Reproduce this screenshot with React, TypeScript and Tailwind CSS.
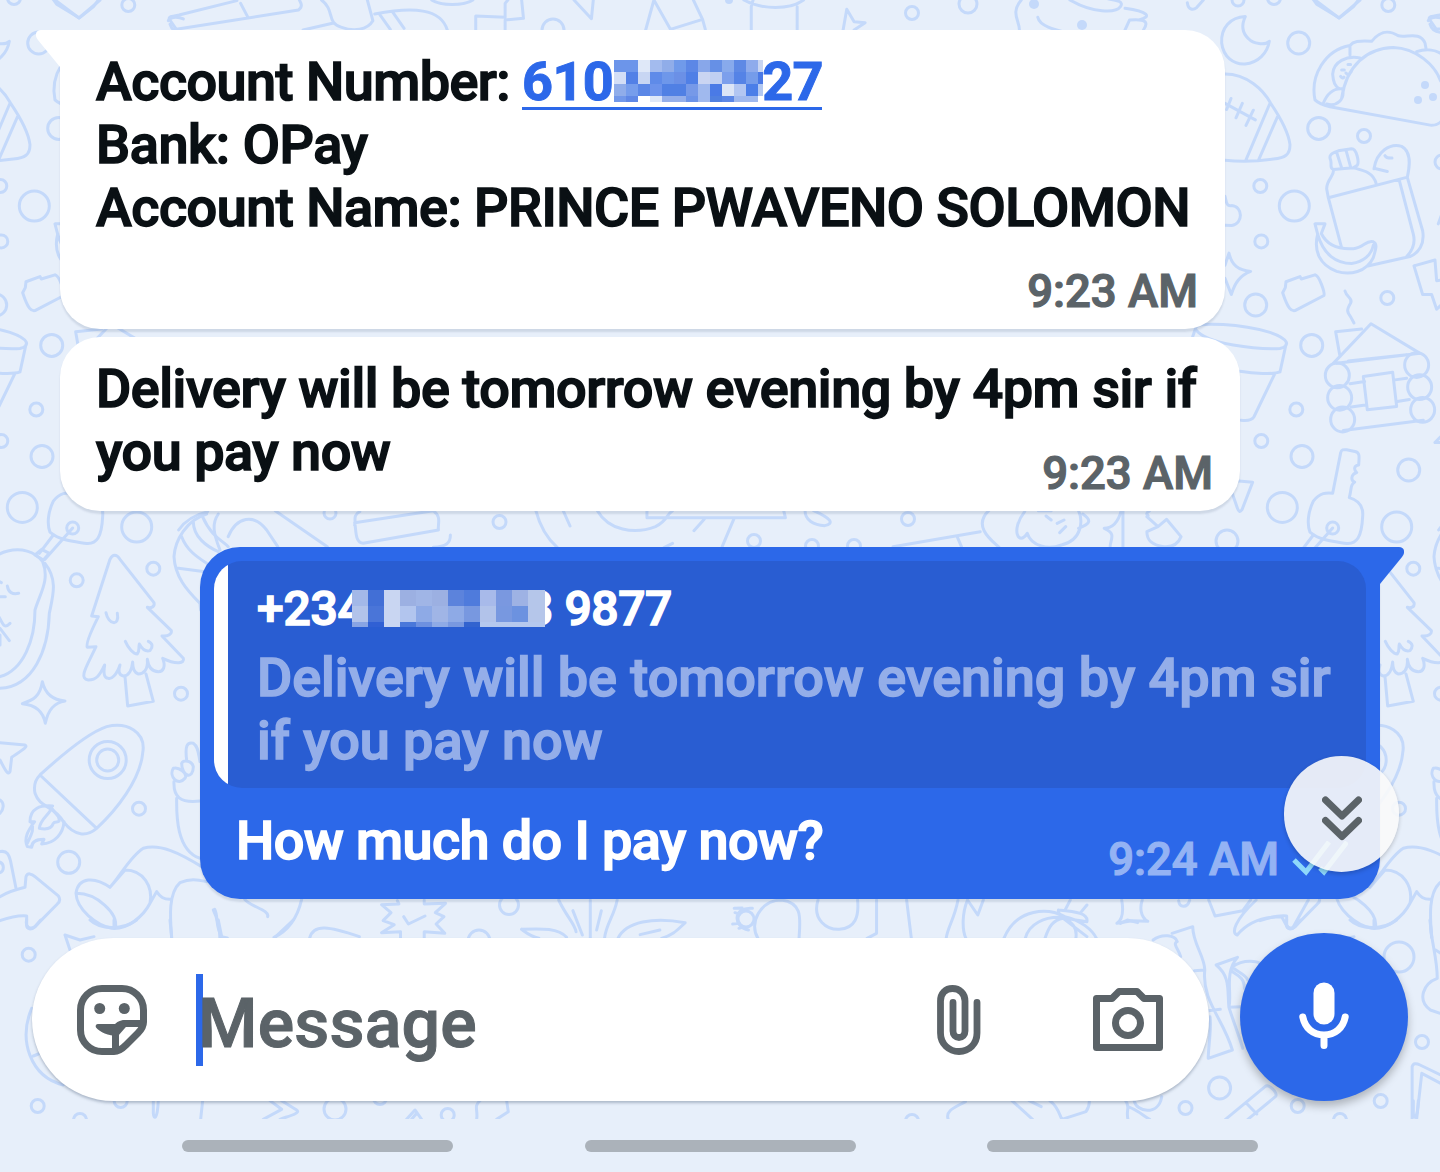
import type { ReactNode } from 'react'

// Colours of the censored blocks, one array per row
const accountPixels = [
  ['#6c95ea', '#6c95ea', '#dfe8f8', '#a3bbee', '#90ade9', '#709aea', '#5c87e6', '#88a7ea', '#6690e6', '#88aaec', '#5e89e5', '#8eabec', '#c8d5f2'],
  ['#d3def6', '#5280e6', '#c8d6f3', '#5f8be9', '#6e97ea', '#6b90e6', '#4f7fe6', '#cad5f2', '#c0cff2', '#7c9fec', '#5583e6', '#759cea', '#4b7ae6'],
  ['#90adea', '#769dec', '#5b87e6', '#6c93ec', '#5080e4', '#5080e4', '#7699e8', '#a0b9ee', '#4a7ae6', '#dce5f6', '#b2c6f2', '#4b7ee8', '#b2c8f2'],
  ['#7298ea', '#6088e6', '#ffffff', '#dfe8f8', '#95afea', '#95afea', '#6c93e8', '#a0b9ee', '#5080e0', '#5c87e6', '#a0b9ee', '#a0b9ee', '#ffffff'],
]

const phonePixels = [
  ['#a3b8e8', '#426fd6', '#c9d6f2', '#9cb0e2', '#a0b5e6', '#9cb0e2', '#5c83dc', '#4f7bdc', '#a8baea', '#7a98e0', '#9eb2e4', '#b5c6ea', '#b5c6ea'],
  ['#b2c3ea', '#4a75d8', '#c9d6f2', '#b2c5ee', '#8eaae6', '#a0b5e6', '#8eaae6', '#7898e0', '#b2c3ea', '#7898e0', '#6c92e0', '#b5c6ea', '#b5c6ea'],
  ['#88a4e4', '#3060d4', '#c9d6f2', '#4a78da', '#6d90e0', '#8eaae6', '#7898e0', '#3263cf', '#b5c8ee', '#b5c8ee', '#b5c8ee', '#b5c8ee', '#b5c8ee'],
]

// x, y, radius of the bubbles scattered over the wallpaper
const rings = [
  [38.7, 43, 11], [128.3, 5, 6.5], [58.7, 128.4, 11], [104, 136, 6.5], [0.3, 186, 6.5], [34.3, 206, 15],
  [1.3, 241.4, 6.5], [-4.3, 305, 11], [127.3, 298, 6.5], [51.7, 345.4, 11], [36.3, 409.5, 6.5], [1.3, 441, 6.5],
  [42, 456.5, 11], [148.7, 470, 11], [22.3, 507.4, 15], [136.7, 527, 15], [182, 162, 7], [-22, 0, 6],
  [14, -2, 6.5], [76.7, 580.3, 6.5], [153.3, 568.7, 6.5], [181, 693.7, 6.5], [139, 808.7, 6.5], [68.7, 862.3, 11],
  [107.7, 760, 18.5], [107.7, 760, 11], [28.7, 954.7, 6.5], [37.7, 1106, 6.5], [80, 1120, 6.5], [120.7, 1101, 6.5],
  [335, 1109, 11], [447.7, 1115, 6.5], [380, 1098, 6.5], [1219.6, 1088, 11], [1185.5, 1108, 6.5], [139, 957, 15],
  [162, 1042, 6.5], [912, 1121, 6.5], [499.5, 522, 6.5], [908, 519, 6.5], [754, 541, 6.5], [812, 546, 6.5],
  [854, 546, 6.5], [553, 30, 11], [912, 13, 6.5], [968, 4, 9], [509, 905, 9.5], [479, 941, 11], [1227, 541, 11],
  [746, 919, 8], [330, 513, 6], [72.7, 528, 6],
]

function Strokes({ at, paths }: { at: string; paths: string[] }) {
  return (
    <g transform={at}>
      {paths.map((d) => (
        <path key={d} d={d} vectorEffect="non-scaling-stroke" />
      ))}
    </g>
  )
}

function WallpaperTile() {
  return (
    <>
      {rings.map(([x, y, r]) => (
        <circle key={`${x}-${y}-${r}`} cx={x} cy={y} r={r} />
      ))}
      {/* moon, taco, football, picnic bag, cabin, key */}
      <Strokes
        at="translate(-80 0) scale(.3333 .3444)"
        paths={[
          'M196 48C150 50 122 82 125 125C130 165 160 188 195 186C235 182 262 155 268 120C255 132 220 128 205 112C184 92 186 68 196 48Z',
          'M22 8C25 30 40 30 50 22L70 0M398 -4L410 12L478 52L520 20L538 -4',
          'M745 60C755 45 780 50 790 55M750 70C755 88 770 94 790 94',
          'M135 215C200 215 250 260 272 300C300 340 325 380 330 420C330 450 315 458 280 462C220 470 180 470 135 465M269 302L198 464M292 340L236 464M135 300L226 348M153 286L140 318M187 300L168 342M220 320L198 364',
          'M405 290C390 220 435 145 510 132C520 120 535 118 575 120C600 90 625 86 655 104C680 110 720 90 735 125L738 140M510 132L510 160M710 150C740 140 770 145 790 160M405 290C415 300 430 305 450 310L755 364C775 364 790 350 795 330M485 285C500 190 560 140 640 138C710 140 765 190 782 235M540 168C500 160 460 180 458 215C460 240 465 250 478 258M430 300C440 275 460 255 488 258C495 290 470 310 440 302M485 203h8M504 187h8M482 222q6 8 10 2M498 212q8 10 16 -4',
          'M452 465C445 450 455 445 475 438L515 432C530 432 538 470 532 480L520 487L460 492C448 488 456 480 452 465ZM470 442L485 488M498 436L512 485M460 492C465 510 440 520 440 548L445 574L680 515M520 487C550 495 580 500 588 532M582 490C590 440 630 415 665 425C695 440 690 480 682 515M615 452Q620 460 636 459M588 490L622 498M445 574L485 720M658 524L700 680C708 710 695 730 680 745M682 515L728 670C735 710 715 735 690 745L560 773M405 650h30L424 678C440 710 470 725 520 722C550 720 560 695 580 702C595 708 585 730 580 748C560 790 510 800 470 788C420 770 400 730 413 680ZM413 680C430 740 470 765 515 765C550 760 575 740 580 712',
          'M135 570C140 590 140 600 155 597C190 600 190 650 155 655L135 654M135 770L147 735C155 770 175 785 212 788C180 800 165 820 154 855L135 808',
          'M318 818L360 803L364 810L405 798C418 800 435 850 432 858L345 902C335 904 325 900 308 850L316 835ZM495 845C500 865 520 865 512 880C500 900 500 905 512 920L522 938',
          'M702 772L765 755L770 815L795 812M702 772L728 855L755 855L770 898L790 880M790 1260L765 1285L790 1285M790 610L775 650',
          'M38 978L48 950C60 935 180 940 270 965C330 985 330 1005 300 1012C230 1015 80 1000 48 958M318 1000L300 1080C280 1088 220 1084 180 1078M284 1086L222 1210C215 1222 200 1222 183 1220M160 1395L218 1400L186 1480C180 1488 176 1486 172 1475L156 1430',
          'M460 1055L573 940L720 1026L470 1055M480 1035L467 963L545 955M505 1048L680 1030M510 1114L554 1108M645 1103L680 1098M514 1182L556 1176M652 1166L688 1160M490 1250L730 1220M550 1093L638 1081L650 1180L562 1190Z',
          'M436 1090a36 36 0 1 0 72 0a36 36 0 1 0 -72 0M443 1155a36 36 0 1 0 72 0a36 36 0 1 0 -72 0M452 1218a36 36 0 1 0 72 0a36 36 0 1 0 -72 0M674 1060a36 36 0 1 0 72 0a36 36 0 1 0 -72 0M683 1124a36 36 0 1 0 72 0a36 36 0 1 0 -72 0M692 1190a36 36 0 1 0 72 0a36 36 0 1 0 -72 0',
          'M458 1432L482 1315C484 1305 490 1305 500 1306L525 1311C540 1314 538 1325 536 1350C520 1352 522 1365 530 1372C512 1378 512 1395 524 1400C510 1410 516 1415 508 1445C545 1455 550 1480 548 1500C545 1560 530 1580 500 1578C460 1572 420 1570 390 1545C380 1520 385 1485 400 1455C420 1430 440 1430 458 1432Z',
        ]}
      />
      {/* taco spots */}
      <g fill="#c4d9fa" stroke="none">
        <circle cx="165" cy="85" r="4" />
        <circle cx="158" cy="100" r="4" />
        <circle cx="173" cy="97" r="4" />
        <circle cx="1082" cy="25" r="5" />
        <circle cx="1034" cy="4" r="5" />
        <circle cx="729" cy="0" r="4" />
      </g>
      {/* avocado, tree, rocket, stocking */}
      <Strokes
        at="translate(0 500) scale(.3333)"
        paths={[
          'M218 84L135 178M160 105L118 160M105 165L125 148L148 160L130 180Z',
          'M-60 230C-40 150 80 120 128 185C150 240 120 280 105 330C105 420 70 510 0 530M135 190C175 240 158 290 148 340C145 450 100 560 0 565M22 258C25 278 38 284 56 280M0 290H16M-10 240L4 248M-10 340C10 370 10 390 30 370M0 385L28 422M0 405L0 435',
          'M330 178C338 162 350 162 360 178L462 308C465 320 455 325 442 322L514 392C516 402 505 410 486 408L550 475C555 490 530 495 488 475C498 500 490 515 475 515C455 515 445 500 442 478C445 510 430 522 415 522C400 518 398 500 398 486C395 520 380 528 370 528C355 525 355 510 360 495C350 525 335 538 325 535C312 535 310 520 314 495C300 525 290 540 265 540C235 535 260 500 288 440L262 442C255 430 280 380 295 350L275 348ZM375 530L383 618L460 604L438 522M318 338C325 375 360 380 352 340M376 424C385 445 400 462 412 462C420 450 415 445 418 432C428 450 440 455 450 452C460 440 458 430 445 424',
          'M127 545C135 580 155 600 195 603C165 608 145 625 136 670C130 635 110 615 67 611C100 600 120 590 127 545ZM0 728L75 735C85 740 70 748 35 772L30 815C25 825 20 820 0 780M0 900C15 910 10 930 0 940',
          'M120 825C180 770 260 700 320 680C380 665 440 695 428 760C420 840 350 930 290 985C260 1010 225 1010 190 965C160 915 120 925 105 880C100 855 105 840 120 825ZM120 825L290 985',
          'M158 918C120 915 90 925 90 965L104 965C85 990 70 1015 82 1040L95 1042C95 1025 110 1018 132 1018L125 1032C165 1030 190 1000 192 965M155 920C155 940 120 955 118 985C140 990 155 985 160 970C165 960 185 975 175 950L155 925M95 968C105 990 90 1010 82 1030',
          'M530 895C530 930 525 1050 600 1075M600 903C540 910 520 890 522 845M520 805C505 830 535 860 555 835C565 820 535 800 520 805M545 790C545 830 580 840 580 800C575 780 550 780 545 790M560 780C555 740 560 725 580 730C595 740 595 760 600 785',
          'M0 1055C25 1050 28 1070 32 1085L48 1165M-5 1085C15 1090 15 1115 -5 1120M0 1190C25 1175 50 1168 75 1162L78 1130C82 1118 95 1120 105 1130L175 1188C182 1198 180 1205 172 1212L105 1280C95 1290 78 1290 80 1272V1248C50 1245 20 1255 0 1262',
          'M330 1162C360 1130 390 1070 430 1045C480 1030 540 1060 605 1100M375 1110C430 1110 460 1160 450 1210C430 1250 380 1290 335 1285C290 1275 230 1230 228 1180C235 1130 285 1130 330 1162ZM230 1180C290 1180 355 1240 346 1282M450 1210L470 1175C480 1190 490 1200 515 1198M515 1312C510 1250 505 1180 540 1148C570 1135 590 1138 620 1145M640 1230C655 1260 660 1290 660 1320',
          'M522 170C525 120 560 60 620 42M522 170C525 230 560 270 600 310L602 330M580 65C580 110 620 140 655 155M545 110C560 150 590 170 620 190M530 204L615 215M655 42C635 70 640 100 660 150',
        ]}
      />
      <Strokes
        at="translate(100 480) scale(.8546 .3333)"
        paths={[
          'M92 150C100 120 110 105 126 95M120 110C130 170 145 185 150 200M150 170C160 110 180 100 195 150L208 200M205 92L266 200M298 135C300 125 295 105 304 95M298 128L390 92C400 110 395 130 396 150L308 190C298 188 300 150 298 128M410 165C410 190 405 200 390 202M510 92C515 140 525 180 535 202M542 92L550 138M582 92C595 150 625 165 650 140C665 120 662 105 670 92M640 92V113H802L800 92M660 203L670 190M742 115L728 200M695 152L707 118M825 92C825 120 835 135 848 137C860 130 855 115 835 92',
          'M928 200L1030 155M1003 170L1008 200M1040 92C1020 140 1045 185 1052 202M1082 95C1065 150 1075 200 1085 160C1090 200 1110 210 1125 195C1150 180 1150 120 1145 92M1098 92L1113 92M1107 108L1113 120M1128 120L1120 130M1123 158L1130 140M1150 102C1160 120 1160 130 1145 145M1195 92C1190 140 1180 145 1175 145C1190 160 1182 180 1182 200M1197 92V200M1225 110L1238 140L1248 118L1265 170C1262 190 1255 202 1245 200C1230 195 1225 180 1225 155L1238 140M1225 110C1230 105 1220 105 1228 93',
        ]}
      />
      <Strokes
        at="translate(100 880) scale(.7908 .3333)"
        paths={[
          'M145 88C150 110 145 140 155 175M255 58C250 110 240 150 220 172M183 58C190 80 215 90 212 110M265 175C270 130 290 140 328 170',
          'M376 62L378 72L356 74L368 98L358 122L372 134L356 158L380 155V175M410 175V155L436 160L425 132L435 110L424 98L437 70L410 72V60M384 110L390 132L411 108',
          'M580 60C590 110 600 130 602 155M598 92L610 165M620 60V175M654 60C650 110 640 130 638 175M634 92L628 150M533 148C560 145 580 145 590 172M533 148C540 160 545 170 555 175M655 175C665 125 700 110 740 128C730 150 725 165 710 175M683 164L708 150',
          'M802 85L812 84M803 98L806 100M800 132L808 130M808 145L812 142M825 85C800 80 800 140 820 150M832 175C820 130 835 60 862 60C890 70 885 120 884 175M908 60C900 120 920 150 935 148C955 145 960 110 958 60M982 60V160L970 175M1020 60L1026 175M1085 60C1080 120 1072 140 1070 175M1097 60C1090 100 1090 150 1095 175M1097 60L1110 105L1117 60',
          'M1143 175C1160 80 1200 85 1220 110C1240 120 1255 150 1260 175M1170 175C1175 130 1195 110 1215 112M1195 175C1200 140 1205 120 1218 115L1248 170M1218 115C1235 130 1235 160 1234 175M1212 90C1210 110 1230 120 1248 125C1250 100 1235 95 1212 90M1220 92L1227 60M1240 98L1248 75M1292 60C1295 100 1292 120 1286 130L1305 122L1325 124C1315 110 1315 80 1318 60M1364 62C1365 85 1375 85 1378 60M1402 60L1410 108L1445 92L1455 60M1528 60L1508 145C1500 150 1500 130 1494 110C1470 110 1450 130 1438 165C1430 160 1435 120 1462 60',
        ]}
      />
      {/* top edge */}
      <Strokes
        at="scale(.9184 .3333)"
        paths={[
          'M60 0L86 54L109 0M185 60C182 50 188 48 195 45L258 2M185 60L192 88L325 30C330 20 328 10 326 0M262 10L270 52M350 0C365 30 355 70 372 82C385 95 400 90 406 62L400 0M330 90L362 70M408 42C450 20 480 25 487 90M413 42L425 88M428 38L440 85M470 0C480 18 505 18 515 0M518 90V48L550 52V10L553 0M568 0L570 55L550 60V90M625 0L644 56L646 0M712 0L703 90M712 0L730 88L765 58L755 0M765 58L768 88M818 90V20L820 0M810 0C830 30 860 30 875 0M868 20V90M918 90L922 28L930 65L942 68L930 90M1112 0C1100 40 1110 60 1110 90M1130 52C1132 80 1150 90 1165 100M1165 0C1190 40 1215 40 1220 20C1225 0 1210 0 1205 -5M1225 90L1230 60C1250 55 1250 70 1245 90M1240 60C1255 50 1250 35 1225 25',
        ]}
      />
      <Strokes
        at="translate(20 920) scale(.3333)"
        paths={[
          'M20 0C15 20 30 30 45 20L62 0M210 0C240 30 310 30 350 0M282 0V24M135 45L180 60L222 50M135 45L150 90M450 0L455 52M595 0L605 50L622 54M820 0L765 52M35 265C-5 360 30 470 130 495M40 408L55 402M400 542V580C402 600 412 600 415 542M548 542L542 598M750 542L785 568L730 598M785 542L830 570C845 580 800 590 780 598M1160 598L1185 570L1205 598M1175 598L1190 580M1380 542C1360 560 1375 570 1370 598M1460 542L1465 575L1430 598',
        ]}
      />
      <Strokes
        at="translate(900 920) scale(.3444 .3333)"
        paths={[
          'M790 40L850 20C850 70 885 110 885 150C875 240 940 300 965 390L895 415C895 380 905 330 900 290M735 60C760 40 800 45 805 65C790 70 810 90 815 110M855 152L885 150M895 272L930 268M640 10L660 0L690 8',
          'M918 135L980 112C940 160 965 220 955 262C970 310 985 350 995 385M918 135C960 170 950 210 955 262L990 260M965 140C950 165 1000 155 1000 205M965 140C1000 115 1040 125 1045 130M965 140C975 155 1000 160 1010 180',
          'M140 598C130 570 165 560 190 545M325 542L385 598M435 542C460 560 465 590 470 598L540 575C550 560 550 550 550 542M655 542C670 560 655 570 662 598M662 560C690 570 710 590 725 598M680 542C685 575 750 590 760 530M945 598L1060 500C1070 490 1100 520 1090 530L1010 598M1008 552L1036 582',
          'M1487 598V440C1490 428 1500 430 1510 435L1570 465M1500 598L1515 460L1570 490M1540 0C1540 60 1560 110 1560 175C1520 190 1500 240 1540 270L1568 280M1555 90L1570 100M375 542L410 560',
        ]}
      />
    </>
  )
}

function Wallpaper() {
  return (
    <svg
      className="absolute top-0 left-0 h-[1119px] w-[1440px]"
      viewBox="0 0 1440 1119"
      fill="none"
      stroke="#c4d9fa"
      strokeWidth="3"
      strokeLinecap="round"
      strokeLinejoin="round"
      aria-hidden="true"
    >
      <WallpaperTile />
      <g transform="translate(1260 0)">
        <WallpaperTile />
      </g>
    </svg>
  )
}

function Mosaic({ pixels, size, className }: { pixels: string[][]; size: number; className: string }) {
  return (
    <svg className={className} shapeRendering="crispEdges" aria-hidden="true">
      {pixels.flatMap((row, y) =>
        row.map((fill, x) => (
          <rect key={`${x}-${y}`} x={x * size} y={y * size} width={size} height={size} fill={fill} />
        )),
      )}
    </svg>
  )
}

function Incoming({ className, children }: { className: string; children: ReactNode }) {
  return (
    <div
      className={`relative ml-[60px] rounded-[40px] bg-white pl-9 text-[54px] leading-[63px] text-[#0a1014] shadow-[0_3px_2px_rgba(60,80,110,0.14)] ${className}`}
    >
      {children}
    </div>
  )
}

function StickerIcon() {
  return (
    <svg className="h-[70px] w-[70px]" viewBox="0 0 70 70" fill="none" stroke="#5b6368" strokeWidth="7" strokeLinejoin="round">
      <path d="M25 3.5H45A21.5 21.5 0 0 1 66.5 25V37C66.5 42 64 45 61 48L49 60C45 64 42 66.5 37 66.5H25A21.5 21.5 0 0 1 3.5 45V25A21.5 21.5 0 0 1 25 3.5Z" />
      <path d="M38.500 66V48C38.500 42 42 38.500 48 38.500H65" />
      <circle cx="22.700" cy="23.500" r="5.500" fill="#5b6368" stroke="none" />
      <circle cx="47.300" cy="23.500" r="5.500" fill="#5b6368" stroke="none" />
      <path d="M21 39H39C42 39 43 36 47 35H55L41 51C31 51 23 47 19 42.500C18 41 19 39 21 39Z" fill="#5b6368" stroke="none" />
    </svg>
  )
}

function ClipIcon() {
  return (
    <svg className="h-[70px] w-11" viewBox="0 0 44 70" fill="none" stroke="#5b6368" strokeWidth="6.800" strokeLinecap="round">
      <path d="M40 17.500V48C40 59 32 66.500 22 66.500S3.500 59 3.500 48V16C3.500 8.500 8.500 3.500 15.500 3.500S28 8.500 28 16V46C28 50 25.500 52.500 22 52.500S16 50 16 46V17.500" />
    </svg>
  )
}

function CameraIcon() {
  return (
    <svg className="h-[63px] w-[70px]" viewBox="0 0 70 63" fill="none" stroke="#5b6368" strokeWidth="7" strokeLinejoin="round">
      <path d="M3.500 10.500H19L26 3.500H44L51 10.500H66.500V59.500H3.500Z" />
      <circle cx="35" cy="35" r="12.500" />
    </svg>
  )
}

function MicIcon() {
  return (
    <svg className="h-[67px] w-[50px]" viewBox="0 0 50 67" fill="none" stroke="#fff" strokeLinecap="round">
      <path d="M25 11V32" strokeWidth="21" />
      <path d="M3.800 35C6 46 14 53 25 53S44 46 46.200 35M25 53V63.500" strokeWidth="7" />
    </svg>
  )
}

export default function App() {
  return (
    <main className="relative flex h-[1172px] w-[1440px] flex-col overflow-hidden bg-[#e7effa] font-['Roboto',sans-serif] font-medium [-webkit-text-stroke-width:1.5px]">
      <Wallpaper />

      <Incoming className="mt-[30px] h-[299px] w-[1165px] rounded-tl-none pt-5">
        <svg className="absolute top-0 -left-6 h-10 w-7" viewBox="0 0 28 40" fill="#fff" aria-hidden="true">
          <path d="M28 0H5C0 0-2 5 2 10L24 37L28 38Z" />
        </svg>
        <p className="flex h-[63px] whitespace-pre">
          <span className="w-[426px] tracking-[-0.55px]">Account Number: </span>
          <span className="relative flex h-[60px] w-[300px] justify-between border-b-[3px] border-[#2c68e9] font-bold text-[#2c68e9] [-webkit-text-stroke-width:1px]">
            <span className="tracking-[-0.6px]">610</span>
            <Mosaic pixels={accountPixels} size={12} className="absolute top-2.5 left-[92px] h-[42px] w-[149px]" />
            <span className="-mr-px tracking-[-0.6px]">27</span>
          </span>
        </p>
        <p className="tracking-[-0.4px]">Bank: OPay</p>
        <p className="tracking-[-0.52px] whitespace-nowrap">Account Name: PRINCE PWAVENO SOLOMON</p>
        <p className="mt-[22px] pr-[27px] text-right text-[45.5px] leading-[62px] text-[#5b6368] [-webkit-text-stroke-width:1.2px]">9:23 AM</p>
      </Incoming>

      <Incoming className="mt-2 h-[174px] w-[1180px] pt-5">
        <p className="tracking-[-0.45px] whitespace-nowrap">Delivery will be tomorrow evening by 4pm sir if</p>
        <div className="flex justify-between pr-[27px]">
          <p className="tracking-[-0.5px]">you pay now</p>
          <p className="pt-[23px] text-[45.5px] leading-[62px] text-[#5b6368] [-webkit-text-stroke-width:1.2px]">9:23 AM</p>
        </div>
      </Incoming>

      <div className="relative mt-9 ml-[200px] flex h-[352px] w-[1180px] flex-col rounded-[40px] rounded-tr-none bg-[#2c68e9] px-3.5 pt-3.5 shadow-[0_3px_2px_rgba(60,80,110,0.14)]">
        <svg className="absolute top-0 -right-6 h-10 w-7" viewBox="0 0 28 40" fill="#2c68e9" aria-hidden="true">
          <path d="M0 0H23C28 0 30 5 26 10L4 37L0 38Z" />
        </svg>
        <div className="flex h-[227px] w-[1152px] shrink-0 overflow-hidden rounded-[28px] bg-[#295dd2]">
          <div className="w-3.5 shrink-0 bg-white" />
          <div className="pt-[19px] pl-[29px]">
            <p className="relative flex w-[415px] justify-between text-[48px] leading-[58px] text-white">
              <span className="tracking-[-0.2px]">+234</span>
              <span className="tracking-[-0.4px]">3 9877</span>
              <Mosaic pixels={phonePixels} size={16} className="absolute top-[10px] left-[95px] h-[37px] w-[193px]" />
            </p>
            <p className="mt-2 text-[54px] leading-[63px] tracking-[-0.04px] whitespace-nowrap text-[#94aee9]">
              Delivery will be tomorrow evening by 4pm sir
              <br />
              if you pay now
            </p>
          </div>
        </div>
        <div className="flex pl-[22px]">
          <p className="mt-[21px] text-[54px] leading-[63px] tracking-[-0.6px] text-white">How much do I pay now?</p>
          <p className="mt-[41px] ml-auto text-[45.5px] leading-[62px] text-[#94b3f4] [-webkit-text-stroke-width:1.2px]">9:24 AM</p>
          <svg className="mt-[53px] mr-[18px] ml-[13px] h-[36px] w-[56px]" viewBox="0 0 56 36" fill="none" stroke="#8ed8fa" strokeWidth="5">
            <path d="M2 19L14 31L37 1M28 27L32 31L55 1" />
          </svg>
        </div>
        <button
          aria-label="Scroll to latest"
          className="absolute top-[209px] -right-[19px] flex h-[116px] w-[115px] items-center justify-center rounded-full bg-[#fafafa]/90 shadow-[0_2px_4px_rgba(0,0,0,0.2)]"
        >
          <svg className="mt-[9px] h-[45px] w-10" viewBox="0 0 40 45" fill="none" stroke="#5b6368" strokeWidth="7" strokeLinecap="round" strokeLinejoin="round">
            <path d="M3.500 4L20 20L36.500 4M3.500 24.500L20 40.500L36.500 24.500" />
          </svg>
        </button>
      </div>

      <div className="relative mt-[34px] flex items-start pl-8">
        <div className="mt-[5px] flex h-[163px] w-[1177px] shrink-0 items-center rounded-full bg-white pr-[46px] pl-[45px] shadow-[0_2px_3px_rgba(60,80,110,0.35)]">
          <StickerIcon />
          <div className="ml-[49px] h-[92px] w-[7px] bg-[#2c68e9]" />
          <p className="-ml-[5px] pt-[9px] text-[68px] leading-[80px] tracking-[0.2px] text-[#5b6368] [-webkit-text-stroke-width:1px]">Message</p>
          <div className="ml-auto flex items-center gap-28">
            <ClipIcon />
            <CameraIcon />
          </div>
        </div>
        <button
          aria-label="Record voice message"
          className="ml-[31px] flex h-[168px] w-[168px] shrink-0 items-center justify-center rounded-full bg-[#2c68e9] pb-1 shadow-[0_5px_8px_rgba(0,0,0,0.25)]"
        >
          <MicIcon />
        </button>
      </div>

      <div className="relative mt-[39px] flex gap-[131.5px] pl-[182px]">
        <span className="h-3 w-[271px] rounded-full bg-[#abb2ba]" />
        <span className="h-3 w-[271px] rounded-full bg-[#abb2ba]" />
        <span className="h-3 w-[271px] rounded-full bg-[#abb2ba]" />
      </div>
    </main>
  )
}
